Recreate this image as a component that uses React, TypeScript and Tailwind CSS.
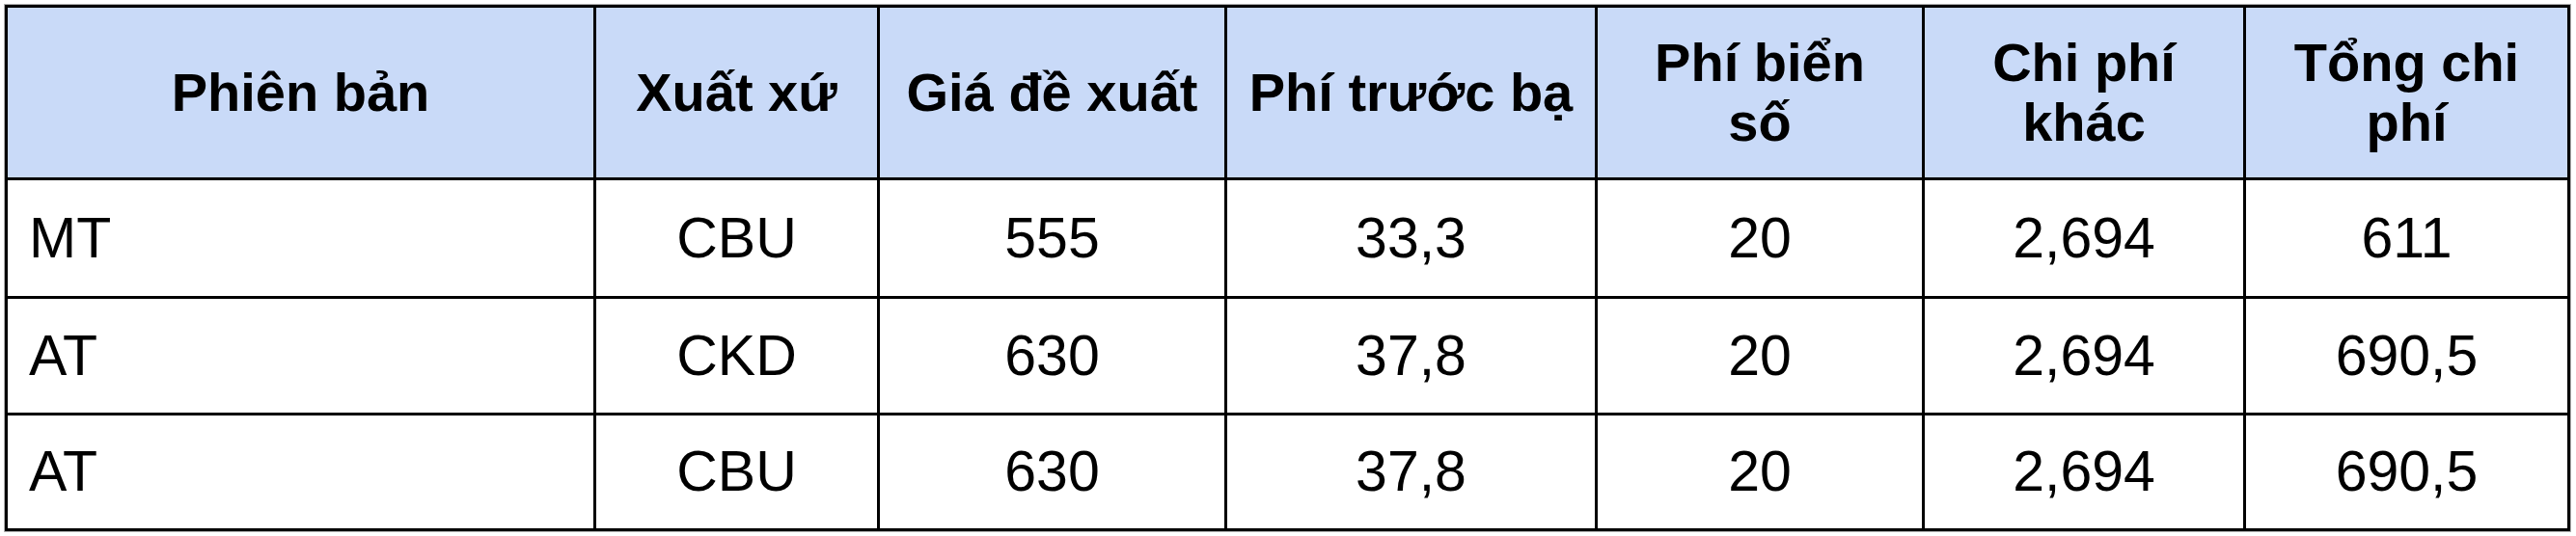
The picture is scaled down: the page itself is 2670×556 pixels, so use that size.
import React from "react";

const headers: string[][] = [
  ["Phiên bản"],
  ["Xuất xứ"],
  ["Giá đề xuất"],
  ["Phí trước bạ"],
  ["Phí biển", "số"],
  ["Chi phí", "khác"],
  ["Tổng chi", "phí"],
];

const rows = [
  ["MT", "CBU", "555", "33,3", "20", "2,694", "611"],
  ["AT", "CKD", "630", "37,8", "20", "2,694", "690,5"],
  ["AT", "CBU", "630", "37,8", "20", "2,694", "690,5"],
];

export default function App() {
  return (
    <div className="w-[2670px] h-[556px] bg-white p-[5px]" style={{ fontFamily: '"Liberation Sans", Arial, sans-serif' }}>
      <div className="grid grid-cols-[607px_291px_357px_381px_336px_330px_333px] grid-rows-[176px_120px_118px_117px] gap-[3px] bg-black p-[3px] w-[2659px] shadow-[0_0_0_1px_#b0b0b0] text-black">
        {headers.map((h, i) => (
          <div
            key={i}
            className="bg-[#c9daf8] flex flex-col items-center justify-center text-center font-bold text-[56px] leading-[62px] whitespace-nowrap"
          >
            {h.map((line, li) => (
              <span key={li}>{line}</span>
            ))}
          </div>
        ))}
        {rows.map((r, ri) =>
          r.map((c, ci) => (
            <div
              key={ri + "-" + ci}
              className={
                ci === 0
                  ? "bg-white flex items-center justify-start pl-[22px] text-[59px] leading-none"
                  : "bg-white flex items-center justify-center text-[59px] leading-none"
              }
            >
              {c}
            </div>
          ))
        )}
      </div>
    </div>
  );
}
